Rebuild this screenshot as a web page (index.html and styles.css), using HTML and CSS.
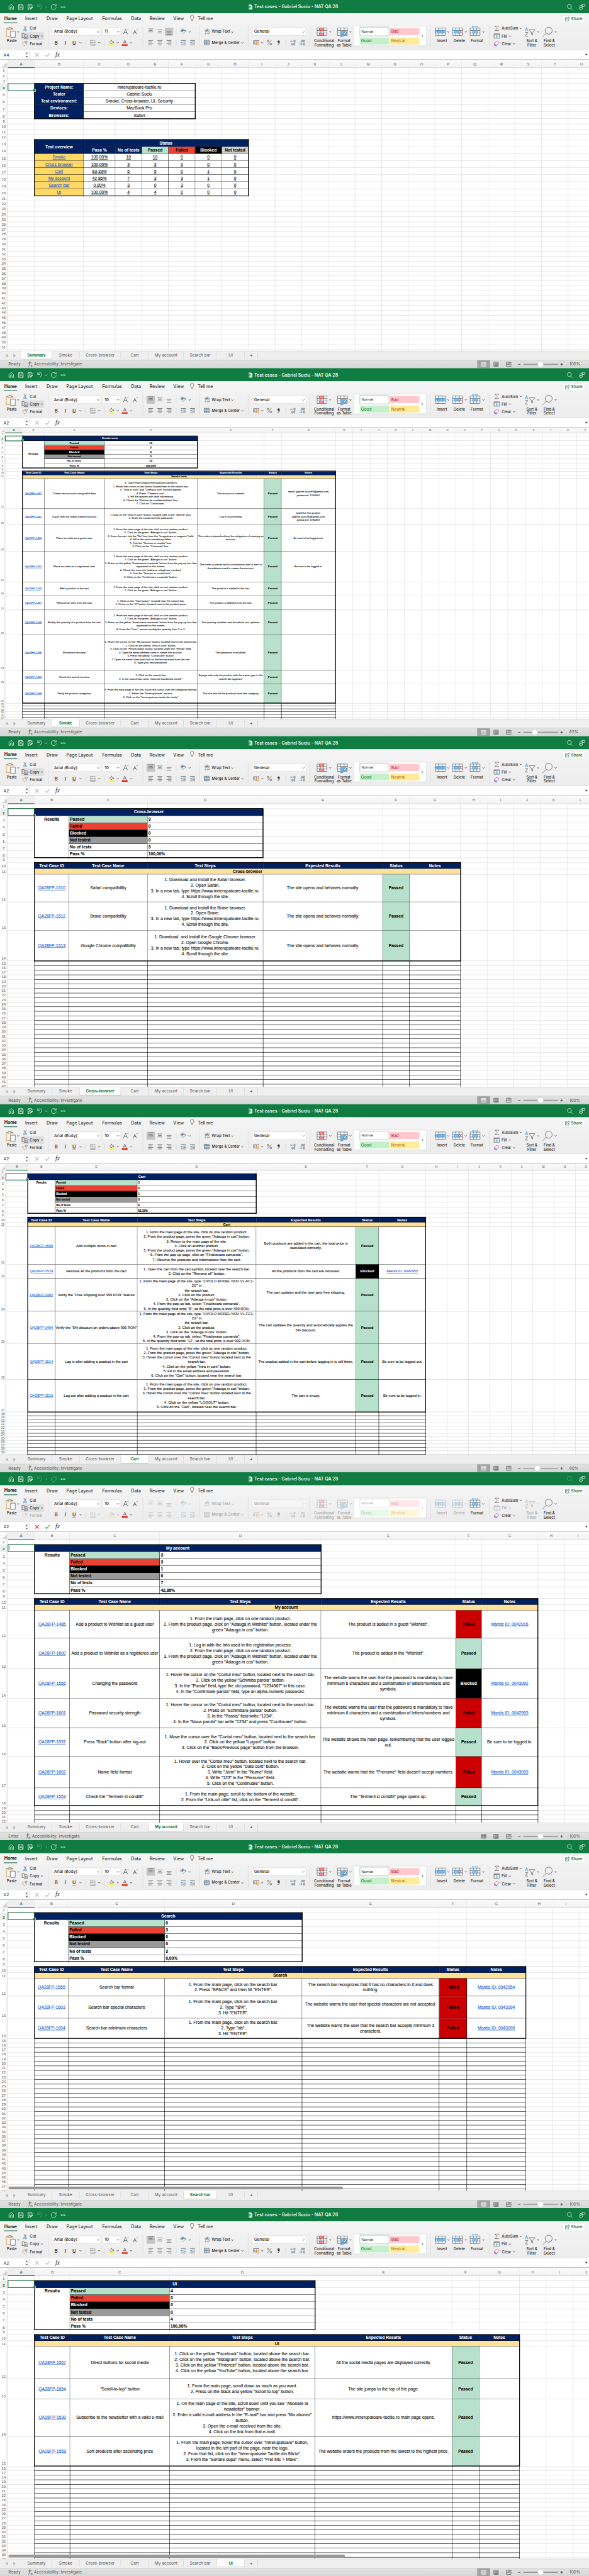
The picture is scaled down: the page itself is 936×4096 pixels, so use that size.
FILE: index.html
```
<!DOCTYPE html>
<html lang="en">
<head>
<meta charset="utf-8">
<title>Test cases - Gabriel Suciu - NAT QA 28</title>
<link rel="stylesheet" href="styles.css">
</head>
<body>
<div class="page"><main class="stage" id="stage"></main></div>
<script src="app.js"></script>
</body>
</html>
```

FILE: styles.css
```
* { box-sizing: border-box; }
body { margin: 0; background: #fff; }
.page { width: 936px; height: 4096px; overflow: hidden; }
.stage { width: 1680px; height: 7350px; transform: scale(0.557143, 0.557279); transform-origin: 0 0; }
.window { width: 1680px; height: 1050px; overflow: hidden; display: flex; flex-direction: column; font-family: Inter, "Open Sans", sans-serif; color: #2b2b2b; background: #fff; }
svg { display: block; fill: none; stroke: #4a4a4a; stroke-width: 1.2; overflow: visible; }
.it { flex: none; white-space: nowrap; display: flex; align-items: center; }
.it.center { justify-content: center; }
.it.dim { opacity: 0.38; }

/* Title bar */
.titlebar { height: 38px; background: #107c41; display: flex; color: #e9f5ee; font-size: 12.8px; font-weight: 600; letter-spacing: -0.05px; }
.titlebar svg { stroke: #e4f2ea; stroke-width: 1.4; }

/* Ribbon */
.ribbon { height: 105px; background: linear-gradient(#f5f5f5, #ececec); border-bottom: 1px solid #c9c9c9; }
.tabs { height: 30px; display: flex; font-size: 12.8px; font-weight: 500; color: #333; }
.tabs .home { font-weight: 700; color: #222; letter-spacing: -0.2px; border-bottom: 2.4px solid #1e7145; height: 27.5px; padding-top: 2.5px; }
.tabs .share { height: 23px; margin-top: 4.5px; background: #fff; border: 1px solid #d6d6d6; border-radius: 3px; color: #1e7145; font-size: 11.5px; font-weight: 600; }
.groups { height: 75px; padding-top: 4px; display: flex; font-size: 10.7px; font-weight: 500; color: #222; }
.group { height: 62px; display: flex; flex: none; border-right: 1px solid #d2d2d2; }
.group.last { border: 0; }
.stack2 { padding-top: 5.5px; display: flex; flex-direction: column; gap: 8.5px; align-items: flex-start; }
.stack3 { padding-top: 0.5px; display: flex; flex-direction: column; align-items: flex-start; }
.line { display: flex; height: 23px; }
.stack3 .line { height: 22px; }
.big { display: flex; flex-direction: column; align-items: center; line-height: 12.2px; text-align: center; height: 62px; }
.field { height: 23px; width: 100%; background: #fff; border: 1px solid #d0d0d0; border-radius: 3px; display: flex; align-items: center; justify-content: space-between; padding-left: 5px; font-size: 11.8px; color: #1e1e1e; }
.pressed { background: #c4c4c4; border-radius: 2px; }
.copy { background: #dedede; border-radius: 3px; }
.gallery { width: 100%; height: 57px; margin-bottom: 2px; background: #fff; border: 1px solid #d2d2d2; border-radius: 3px; display: grid; grid-template-columns: 84px 84px 18px; column-gap: 2px; padding: 1px 0 0 17px; font-size: 11.6px; font-weight: 400; }
.gallery.dim > * { opacity: 0.4; }
.style { height: 20px; margin-top: 4px; padding-left: 4px; line-height: 20px; }
.style.normal { height: 26px; margin-top: 1px; border: 1.5px solid #55a478; border-radius: 2px; line-height: 24px; color: #111; font-family: "Liberation Sans", sans-serif; font-size: 10.4px; }
.style.bad { background: #ffc7ce; color: #b0101c; }
.style.good { background: #c6efce; color: #0f7416; margin-top: 1px; grid-column: 1; }
.style.neutral { background: #ffeb9c; color: #a36200; margin-top: 1px; }
.more { grid-column: 3; grid-row: 1 / span 2; align-self: center; }
.big-i { font-size: 13.5px; font-weight: 600; color: #404040; }
.serif { font-family: "Liberation Serif", serif; font-style: italic; font-size: 16px; font-weight: 400; }

/* Formula bar */
.formula { height: 28px; background: #fff; border-bottom: 2px solid #c2c2c2; display: flex; font-size: 12px; }
.namebox { height: 26px; border-right: 1px solid #c0c0c0; padding-left: 10px; }
.fx { font-family: "Liberation Serif", serif; font-style: italic; font-size: 17px; border-right: 1px solid #ddd; height: 18px; margin-top: 4px; }

/* Sheet */
.sheet { height: 830px; overflow: hidden; display: grid; align-content: start; font-family: "Liberation Sans", Arial, sans-serif; font-size: var(--fs); line-height: var(--lh); color: #000; position: relative; -webkit-text-stroke: 0.15px currentColor; }
.vline { border-right: 1px solid #d6d6d6; }
.hline { border-bottom: 1px solid #d6d6d6; }
.colhead { background: linear-gradient(#fafafa, #f2f2f2); border-bottom: 1px solid #b9b9b9; border-right: 1px solid #dfdfdf; color: #666; font-size: var(--hs); display: flex; align-items: center; justify-content: center; }
.rowhead { background: linear-gradient(90deg, #fff 60%, #f0f0f0); border-bottom: 1px solid #e2e2e2; border-right: 1px solid #cfcfcf; color: #666; font-size: var(--hs); display: flex; align-items: flex-end; justify-content: center; line-height: var(--rl); padding-right: 1px; }
.colhead.on { background: #efefef; color: #1e7145; border-bottom: 2px solid #1e7145; font-weight: 700; }
.rowhead.on { background: #eee; color: #1e7145; font-weight: 700; }
.corner { background: #fafafa; border-bottom: 1px solid #b9b9b9; border-right: 1px solid #cfcfcf; display: flex; align-items: flex-end; justify-content: flex-end; padding: 0 2px 2px 0; }
.corner i { border: solid transparent; border-width: 0 0 var(--ct) var(--cl); border-bottom-color: #d2d2d2; }
.cell { background: #fff; border-right: 1px solid #000; border-bottom: 1px solid #000; display: flex; align-items: center; justify-content: center; text-align: center; white-space: nowrap; overflow: hidden; }
.cell.top { align-items: flex-start; padding-top: 1px; }
.cell.left { justify-content: flex-start; padding-left: 2px; text-align: left; }
.cell.b { font-weight: 700; font-size: var(--bs); }
.cell.small { font-size: 8px; }
.cell.navy { background: #00205f; color: #fff; }
.cell.green { background: #b7e1cd; }
.cell.red { background: #ea4335; }
.cell.crimson { background: #cc0000; }
.cell.black { background: #000; color: #fff; }
.cell.gray { background: #999; }
.cell.silver { background: #ccc; }
.cell.cream { background: #ffe299; }
.cell.gold { background: #ffd966; }
.link { color: #1155cc; text-decoration: underline; }
.u { text-decoration: underline; }
.ruled { border-bottom: 1px solid #000; }
.ruledv { border-right: 1px solid #000; }
.frame { border: 2.4px solid #000; margin: -1.7px -0.7px -0.7px -1.7px; }
.select { border: 2px solid #1e7145; margin: -1.5px -0.5px -0.5px -1.5px; display: flex; align-items: flex-end; justify-content: flex-end; }
.select.handle::after { content: ""; width: 6px; height: 6px; background: #1e7145; border: 1px solid #fff; margin: 0 -4px -4px 0; flex: none; }
.select.edit { align-items: flex-start; justify-content: flex-start; }
.select.edit::after { content: ""; width: 1px; height: 12px; margin: 2px; background: #000; }
.thumb { position: absolute; left: 24px; bottom: 4px; height: 8px; border-radius: 4px; background: #999; }

/* Sheet tabs and status bar */
.sheettabs { height: 26px; background: #efefef; border-top: 1px solid #cfcfcf; display: flex; font-size: 11.6px; color: #555; }
.sheettabs .tab { height: 22px; border-right: 1px solid #cfcfcf; justify-content: center; }
.sheettabs .on { background: #fff; color: #107c41; font-weight: 700; border-radius: 0 0 3px 3px; box-shadow: 0 1px 1px #aaa; letter-spacing: -0.3px; }
.status { height: 23px; background: linear-gradient(#e2e2e2, #d6d6d6); border-top: 1px solid #b4b4b4; display: flex; font-size: 11.7px; color: #555; }
.mode { background: #a3a3a3; }
.mode svg { stroke: #fff; }
```

FILE: app.js
```
const box = (x, w, html, cls = '') => ({ x, w, html, cls });
const flow = (x0, items) => {
  let c = x0;
  return items.map(i => {
    const m = +(i.x - c).toFixed(2);
    c = i.x + i.w;
    return `<div class="it ${i.cls}" style="margin-left:${m}px;width:${i.w}px">${i.html}</div>`;
  }).join('');
};
const svg = (x, y, w, h, body) => `<svg width="${w}" height="${h}" viewBox="${x} ${y} ${w} ${h}">${body}</svg>`;
const icon = (x, w, y, h, body, cls) => box(x, w, svg(x, y, w, h, body), cls);
const caret = (x, y) => `<path stroke-width="1.6" d="M${x - 2.6} ${y - 1.4}l2.6 2.8 2.6-2.8"/>`;
const B = '#2f8fd8';

function titlebar(o) {
  const I = (x, w, b, c) => icon(x, w, 0, 38, b, c);
  return `<div class="titlebar">` + flow(0, [
    I(24, 16, '<path d="M25.5 18.5 32 12.6l6.5 5.900V27h-4.200v-5.500a2.300 2.300 0 0 0-4.600 0V27h-4.200z"/>'),
    I(52, 15, '<path d="M52.700 13h11l2.500 2.500V27H52.700zM55.500 13v4.500h7.500V13M55.500 27v-6h8v6"/>'),
    I(79, 16, '<path d="M92 17v-1.500L89.500 13H79.700v14h4M82.500 13v4.500h6.500V13M82.500 27v-6h5"/><path stroke-width="3" d="M86.500 26l6.500-6.500"/>'),
    I(106, 16, '<path d="M107.500 12.500v6h6M107.500 18c3-4 8-6 10.500-3s1 5-4 12"/>', o.undo ? '' : 'dim'),
    I(128, 8, caret(132, 20.500), o.undo ? '' : 'dim'),
    I(144, 18, '<path d="M158.500 15.500a7.200 7.200 0 1 0 1.800 4.800M160 12v5h-5"/>', o.edit ? 'dim' : ''),
    I(173, 14, '<path stroke="none" fill="#e4f2ea" d="M173.500 18.700h3v3h-3zM178.500 18.700h3v3h-3zM183.500 18.700h3v3h-3z"/>'),
    I(708, 12, '<path fill="#fff" stroke="none" d="M709.500 13h6.500l3.500 3.500V27h-10z"/><path fill="#107c41" stroke="none" d="M708 16h7v8h-7z"/><path stroke-width="1.200" d="M709.500 17.800l4 4.500m0-4.500l-4 4.500"/>'),
    box(725, 250, 'Test cases - Gabriel Suciu - NAT QA 28'),
    I(1617, 17, '<circle cx="1624" cy="18.500" r="5.700"/><path d="M1628 22.500l5 5"/>', o.edit ? 'dim' : ''),
    I(1651, 18, '<circle cx="1656.500" cy="18" r="2.700"/><path d="M1652 22.500h9.500c0 7-9.500 7-9.500 0zM1660 12.500h8v5.500h-4l-2.500 2z"/>')
  ]) + `</div>`;
}

function tabs() {
  const names = [['Insert', 72], ['Draw', 133], ['Page Layout', 189.3], ['Formulas', 291.5], ['Data', 374], ['Review', 426.4], ['View', 494.3]];
  return `<div class="tabs">` + flow(0, [
    box(11.3, 37.500, 'Home', 'home center'),
    ...names.map(([t, x]) => box(x, 48, t)).map((b, i, a) => (b.w = i < a.length - 1 ? a[i + 1].x - b.x : 44, b)),
    icon(541, 16, 38, 30, '<path d="M546 55.500c0-2.500-3-3.500-3-6.800a5 5 0 0 1 10 0c0 3.300-3 4.300-3 6.800zM546 58.500h4"/>'),
    box(564, 50, 'Tell me'),
    box(1604, 65, svg(1604, 42, 24, 23, '<path stroke="#1e7145" d="M1616 49h-4.500v10h10v-3M1614.500 55c0-4 3-5.500 6-5.500v-2.500l4 4-4 4v-2.500c-2.500 0-4.500.500-6 2.500z"/>') + 'Share', 'share')
  ]) + `</div>`;
}

const lines = (x, y, s) => s.map(([dx, w], i) => `<path d="M${x + dx} ${y + i * 4.200}h${w}"/>`).join('');
const grid = (x, y) => `<path fill="#fff" d="M${x} ${y}h28v21h-28z"/><path d="M${x} ${y + 7}h28M${x} ${y + 14}h28M${x + 9} ${y}v21M${x + 19} ${y}v21"/>`;

function groups(o) {
  const d = o.edit ? 'dim' : '';
  const L = (x0, items) => `<div class="line">${flow(x0, items)}</div>`;
  const U = (x, w, b, c = '') => icon(x, w, 77.5, 23, b, c);
  const D = (x, w, b, c = '') => icon(x, w, 109, 23, b, c);
  const S = x => `<path stroke="#d4d4d4" d="M${x} 112v18"/>`;
  const big = (x, w, art, label, c = '') => box(x, w, `<div class="big">${svg(x, 72, w, 39.500, art)}<div>${label}</div></div>`, c);
  const group = (x, end, items, c = '') => `<div class="group ${c}" style="width:${end - x}px">${flow(x, items)}</div>`;
  const field = (x, w, t) => `<div class="field">${t}${svg(x, 77.500, 12, 23, caret(x + 5, 89.500))}</div>`;
  const press = n => o.align === n ? 'pressed' : '';

  const clip = group(0, 138, [
    big(11, 45, `<path stroke="#e9a045" stroke-width="1.800" d="M29 104.500H18V81h19v7"/><path fill="#f3f3f3" d="M22 83v-3h3c0-3.500 5-3.500 5 0h4v3z"/><path fill="#fff" d="M30 89h13.500v17.500H30z"/>${caret(52, 91)}`, 'Paste'),
    box(60, 66, `<div class="stack3">` +
      L(60, [icon(66, 13, 72.5, 22, `<path d="M68 77l5.500 10M75 77l-5.500 10"/><circle stroke="${B}" cx="68" cy="89" r="2"/><circle stroke="${B}" cx="74.500" cy="89" r="2"/>`), box(85, 30, 'Cut')]) +
      L(60, [box(60, 66, flow(60, [icon(62, 19, 94.5, 22, '<path d="M68 109.500h-5V98h6M69 100.500h6.500l3.500 3.500v8.500H69zM71.500 106h5M71.500 109h5"/>'), box(85, 28, 'Copy'), icon(115, 10, 94.5, 22, caret(119.500, 105.500))]), o.copy ? 'copy' : '')]) +
      L(60, [icon(62, 18, 116.5, 22, '<path d="M72 122.500l3-3.500 3 3-3 3.500"/><path d="M70 122l6.500 6"/><path stroke="#e08a3a" d="M70 122l-6.500 3 6 8.500 7-5.500z"/>', d), box(85, 38, 'Format', d)]) + `</div>`)
  ]);

  const A = (x, s) => `<path stroke-width="1.300" d="M${x} 96l${s / 2.4} -${s}l${s / 2.4} ${s}M${x + 1.700} ${96 - s * .35}h${s / 1.750}"/>`;
  const font = group(138, 408, [box(138, 262, `<div class="stack2">` +
    L(138, [box(148, 140, field(148, 140, 'Arial (Body)')), box(292, 53, field(292, 53, o.size)),
      U(352, 17, A(352, 14) + `<path stroke="${B}" d="M363 84l2-2.300 2 2.300"/>`), U(380, 15, A(380, 11) + `<path stroke="${B}" d="M389.500 82l2 2.300 2-2.300"/>`)]) +
    L(138, [box(154, 12, 'B', 'big-i center'), box(181, 10, 'I', 'serif center'), box(206, 11, '<u>U</u>', 'big-i center'),
      D(224, 24, caret(229.600, 121) + S(244.500)),
      D(257, 44, `<path stroke-dasharray="1.500 1.500" d="M258 114h13v12M258 114v12M264.500 114v12M258 120h13"/><path stroke-width="1.600" d="M257 127.500h15"/>${caret(283, 121)}${S(297.500)}`, d),
      D(310, 30, `<path d="M313 120l5.500-5.500 4.500 5-5.500 4.500zM318 113v4"/><path stroke="${B}" stroke-width="1.800" d="M323 117.500c1.500 1.500 1.500 3 1.500 5"/><path stroke="none" fill="#ff0" d="M310 125.500h16v4h-16z"/>${caret(336, 121)}`, d),
      D(347, 32, `<path d="M351.500 124l4.500-11 4.500 11M353 120.500h6"/><path stroke="none" fill="#f00" d="M347.500 125.500h16.500v4h-16.500z"/>${caret(374, 121)}`)]) + `</div>`)]);

  const al = group(408, 569, [box(408, 158, `<div class="stack2">` +
    L(408, [U(418, 24, lines(423, 81, [[0, 14], [2, 10], [0, 14]]), d + ' ' + press('top')), U(444, 24, lines(449, 84, [[0, 14], [2, 10], [0, 14]]), d),
      U(470, 24, lines(475, 88, [[0, 14], [2, 10], [0, 14]]), d + ' ' + press('bottom')),
      U(500, 46, `<path stroke="#d4d4d4" d="M502.500 80v18"/><path stroke="${B}" stroke-width="1.400" d="M521 95.500l9-9.500M526 85.500h4.500v4.500"/><circle cx="518" cy="87" r="2.500"/><circle cx="523" cy="84" r="2.200"/><path d="M516 82l5 8M519 80l5 6"/>${caret(541, 89.500)}`, d)]) +
    L(408, [D(423, 15, lines(423, 114.5, [[0, 14], [0, 10], [0, 14], [0, 10]]), d), D(449, 15, lines(449, 114.5, [[0, 14], [2, 10], [0, 14], [2, 10]]), d), D(475, 15, lines(475, 114.5, [[0, 14], [4, 10], [0, 14], [4, 10]]), d),
      D(500, 31, S(502.500) + lines(516, 114.5, [[0, 14], [7, 7], [7, 7], [0, 14]]) + `<path stroke="${B}" stroke-width="1.400" d="M522 120.800h-6m2.500-2.500l-2.500 2.500 2.500 2.500"/>`, d),
      D(542, 15, lines(542, 114.5, [[0, 14], [7, 7], [7, 7], [0, 14]]) + `<path stroke="${B}" stroke-width="1.400" d="M542 120.800h6m-2.500-2.500l2.500 2.500-2.500 2.500"/>`, d)]) + `</div>`)]);

  const wrap = group(569, 708, [box(569, 132, `<div class="stack2">` +
    L(569, [U(584, 16, `<circle cx="587" cy="86" r="2.200"/><path d="M589.500 83v5.500M592 80v8.500M588 92.500c-3-1.500-5 4 0 3"/><circle cx="594.500" cy="86" r="2.200"/><path stroke="${B}" stroke-width="1.400" d="M597 90v4h-5.500m2.500-2.500l-2.500 2.500 2.500 2.500"/>`, d), box(604, 54, 'Wrap Text', d), U(658, 10, caret(662.700, 90), d)]) +
    L(569, [D(582, 16, `<path d="M582.500 114h14v13h-14zM589.500 114v3M589.500 124v3"/><path stroke="${B}" stroke-width="1.400" d="M583 117.500h13.500v6H583zM585 120.500h9.500"/>`, d), box(604, 82, 'Merge &amp; Center', d), D(687, 10, caret(691.500, 121), d)]) + `</div>`)]);

  const num = group(708, 885, [box(708, 168, `<div class="stack2">` +
    L(708, [box(718.5, 155, field(718, 155, 'General'), o.edit ? 'dim' : '')]) +
    L(708, [D(722, 30, `<path d="M733 124.500h-10V115h15.500v4M727 117.500c-2 0-2 4.500 0 4.500M732 117.500c-2 0-2 4.500 0 4.500"/><path stroke="#e08a3a" fill="#fff" d="M732 120h6.500v7.500H732zM732 122.500h6.500M732 125h6.500"/>${caret(748, 121)}`, d),
      D(761, 15, '<circle cx="764.500" cy="116.500" r="2.600"/><circle cx="772.500" cy="124.500" r="2.600"/><path d="M774 114l-11 13"/>', d),
      D(790, 28, `<path fill="#444" stroke="none" d="M791.500 118a3.300 3.300 0 1 1 6.500 0c0 5-2.500 7.500-5.500 9.500l-.500-1c2-1.500 3-3 3-5-2 .500-3.500-1-3.500-3.500z"/>${S(815)}`, d),
      D(828, 16, `<path stroke="${B}" stroke-width="1.400" d="M835 116.500h-6.500m2.500-2.500l-2.500 2.500 2.500 2.500"/><ellipse cx="840" cy="116.500" rx="2" ry="3.500"/><ellipse cx="834" cy="125" rx="1.800" ry="3"/><ellipse cx="839.500" cy="125" rx="1.800" ry="3"/><path d="M830 128h1"/>`, d),
      D(854, 17, `<path stroke="${B}" stroke-width="1.400" d="M854.500 125h7m-2.500-2.500l2.500 2.500-2.500 2.500"/><ellipse cx="861.500" cy="116.500" rx="1.800" ry="3.300"/><ellipse cx="867" cy="116.500" rx="1.800" ry="3.300"/><ellipse cx="867" cy="125" rx="1.800" ry="3"/><path d="M857 119.500h1"/>`, d)]) + `</div>`)]);

  const styles = group(885, 1227, [
    big(893, 63, grid(904.5, 80) + `<path fill="#ff8a8a" stroke="#e33" d="M911 80h11v7h-11zM911 94h11v7.500h-11z"/><path fill="#6db3ec" stroke="none" d="M911 87.500h5v6h-5z"/>${caret(942, 91)}`, 'Conditional<br>Formatting', d),
    big(958, 47, grid(962.5, 80) + `<path fill="#6db3ec" stroke="none" d="M972 87.500h18V101h-18z"/><path fill="#eee" d="M979 96l11-11 2 2-9.500 12z"/><path fill="#6db3ec" stroke="${B}" d="M979 97l3 3c-2 4-7 6-11 5 3-1 3-3 4-5 1-2 2-3 4-3z"/>${caret(999.6, 91)}`, 'Format<br>as Table', d),
    box(1008, 208, `<div class="gallery ${d}"><div class="style normal">Normal</div><div class="style bad">Bad</div><div class="style good">Good</div><div class="style neutral">Neutral</div><div class="more">${svg(1200, 92, 14, 20, '<path stroke-width="1.600" d="M1205 98.500l3 3.300-3 3.300"/>')}</div></div>`)
  ]);

  const cells = group(1227, 1396, [
    big(1238, 45, grid(1242, 80) + `<path fill="#7fc0f2" stroke="${B}" d="M1247 86.500h23v8h-23zM1255 86.500v8M1263 86.500v8"/><path stroke="${B}" stroke-width="1.400" d="M1252 90.500h-12m5.500-5l-5.500 5 5.500 5"/>${caret(1278.7, 91)}`, 'Insert', d),
    big(1288, 44, grid(1291, 80) + `<path fill="#7fc0f2" stroke="${B}" d="M1295 86.500h13v8h-13z"/><path stroke="#f04438" stroke-width="1.500" d="M1308 84.500l12 12.500m0-12.500l-12 12.500"/>${caret(1328.6, 91)}`, 'Delete', d),
    big(1338, 45, grid(1341, 80) + `<path fill="#7fc0f2" stroke="${B}" d="M1348 86.500h14v8h-14zM1347.500 76.500h15M1347.500 74.500v4M1362.500 74.500v4"/>${caret(1379, 91)}`, 'Format')
  ]);

  const E = (x, w, y0, b, c) => icon(x, w, y0, 22, b, c);
  const edit = group(1396, 1600, [
    box(1396, 95, `<div class="stack3">` +
      L(1396, [E(1410, 15, 72.5, '<path d="M1422.500 79v-2h-11l6.500 6.500-6.500 6.500h11v-2"/>'), box(1431, 47, 'AutoSum'), E(1480, 10, 72.5, caret(1485, 83.5))]) +
      L(1396, [E(1408, 18, 94.5, `<path d="M1409 99h15.500v12.500H1409zM1409 101h15.500"/><path stroke="${B}" stroke-width="1.400" d="M1417 102v7.500m-3-3l3 3 3-3"/>`, d), box(1431, 18, 'Fill', d), E(1450, 10, 94.5, caret(1454.5, 105.500), d)]) +
      L(1396, [E(1409, 16, 116.5, '<path stroke="#a349b4" fill="#fbf4fc" d="M1409.500 127.500l6.500-7 7.500 3-7.500 9.500z"/><path stroke="#a349b4" fill="#d9a0e2" d="M1409.500 127.500l5 1.500 2 5-6-2z"/>'), box(1431, 28, 'Clear'), E(1461, 10, 116.5, caret(1466, 127.500))]) + `</div>`),
    big(1495, 44, `<path stroke="${B}" stroke-width="1.400" d="M1498 89l4-10.500 4 10.500M1499.500 85.500h5"/><path d="M1498.500 92.500h7l-7 10.500h7.500M1509 84.500h17l-6.500 7.500v8l-4-2.500V92z"/>${caret(1535, 91)}`, 'Sort &amp;<br>Filter', d),
    big(1544, 45, `<circle cx="1565" cy="87.500" r="10"/><path d="M1558 95l-10.500 10.500"/>${caret(1585, 91)}`, 'Find &amp;<br>Select')
  ], 'last');
  return `<div class="groups">${clip}${font}${al}${wrap}${num}${styles}${cells}${edit}</div>`;
}

function formula(o) {
  const x = o.edit ? '#e5484d' : '#c3c3c3', v = o.edit ? '#5fae3c' : '#c3c3c3';
  return `<div class="formula">` + flow(0, [
    box(0, 85, flow(10, [box(10, 50, o.ref), icon(70, 12, 143, 26, '<path fill="#666" stroke="none" d="M73 154l3.300-5 3.300 5zM73 159.500l3.300 5 3.300-5z"/>')]), 'namebox'),
    icon(98, 15, 143, 27, `<path stroke="${x}" stroke-width="2.400" d="M100.500 151.500l10 10m0-10l-10 10"/>`),
    icon(127, 16, 143, 27, `<path stroke="${v}" stroke-width="2.400" d="M129 157.500l4 4 8.500-10"/>`),
    box(158, 23, 'fx', 'fx'),
    icon(1664, 14, 143, 27, '<path fill="#555" stroke="none" d="M1668.500 153.500h7.500l-3.700 5.500z"/>')
  ]) + `</div>`;
}

const letters = 'ABCDEFGHIJKLMNOPQRSTUVWXYZ';
function sheet(o) {
  const y0 = 171, yEnd = 1001;
  const diff = (a, s) => a.map((v, i) => +((v + .5) - (i ? a[i - 1] + .5 : s)).toFixed(2));
  const cw = diff(o.cols, 0), rh = diff(o.rows, y0);
  const px = a => a.map(v => v + 'px').join(' ');
  const at = (c1, c2, r1, r2) => `grid-area:${r1 + 1}/${c1 + 1}/${r2 + 2}/${c2 + 2}`;
  let h = '';
  const nc = cw.length - 1, nr = rh.length - 1;
  for (let c = 1; c <= nc; c++) h += `<div class="vline" style="${at(c, c, 1, nr)}"></div>`;
  for (let r = 1; r <= nr; r++) h += `<div class="hline" style="${at(1, nc, r, r)}"></div>`;
  h += `<div class="corner" style="${at(0, 0, 0, 0)}"><i></i></div>`;
  for (let c = 1; c <= nc; c++) h += `<div class="colhead ${c === 1 ? 'on' : ''}" style="${at(c, c, 0, 0)}">${letters[c - 1]}</div>`;
  const sel = +o.ref.slice(1);
  for (let r = 1; r <= nr; r++) {
    const label = yEnd - o.rows[r - 1] > 4 ? r : '';
    h += `<div class="rowhead ${r === sel ? 'on' : ''}" style="${at(0, 0, r, r)}">${label}</div>`;
  }
  for (const [c1, c2, r1, r2, t, cls] of o.cells) h += `<div class="cell ${cls}" style="${at(c1, c2, r1, r2)}"><div>${t}</div></div>`;
  if (o.ruled) {
    for (let r = o.ruled; r <= nr; r++) h += `<div class="ruled" style="${at(2, 7, r, r)}"></div>`;
    for (let c = 1; c <= 7; c++) h += `<div class="ruledv" style="${at(c, c, o.ruled, nr)}"></div>`;
  }
  for (const f of o.frames) h += `<div class="frame" style="${at(...f)}"></div>`;
  h += `<div class="select ${o.edit ? 'edit' : 'handle'}" style="${at(1, 1, sel, sel)}"></div>`;
  if (o.thumb) h += `<div class="thumb" style="width:${o.thumb}px"></div>`;
  const f = o.fonts;
  return `<div class="sheet" style="grid-template-columns:${px(cw)};grid-template-rows:${px(rh)};--fs:${f[0]}px;--bs:${f[1]}px;--lh:${f[2]}px;--hs:${f[3]}px;--rl:${f[4]}px;--ct:${rh[0] * .6}px;--cl:${cw[0] * .6}px">${h}</div>`;
}

function bottom(o) {
  const n = ['Summary', 'Smoke', 'Cross-browser', 'Cart', 'My account', 'Search bar', 'UI', '<b>+</b>'];
  const e = [61, 148, 227, 345, 424, 524, 619, 698, 736];
  const zx = { 100: 1542, 80: 1532.6, 65: 1525.3 }[o.zoom];
  const G = (x, w, b, c) => icon(x, w, 1027, 22, b, c);
  return `<div class="sheettabs">` + flow(0, [
    icon(0, 60, 1001, 25, '<path fill="#b5b5b5" stroke="none" d="M22 1009v10l-7-5zM38 1009v10l7-5z"/>'),
    ...n.map((t, i) => box(e[i], e[i + 1] - e[i], t, 'tab ' + (i === o.tab ? 'on' : '')))
  ]) + `</div><div class="status">` + flow(0, [
    box(24, 36, o.edit ? 'Enter' : 'Ready'),
    icon(o.edit ? 73 : 79, 15, 1027, 22, `<g transform="translate(${o.edit ? 73 : 79} 0)"><circle cx="6" cy="1032.500" r="1.800"/><path d="M1 1033.500c3 3 7 3 10 0M6 1036v3l-3.500 6M6 1039l2 2M8.500 1040.500l5 5m0-5l-5 5"/></g>`),
    box(o.edit ? 91 : 97, 150, 'Accessibility: Investigate'),
    G(1361, 37, '<path d="M1373 1033h13v11h-13zM1373 1036.500h13M1373 1040.200h13M1377.300 1033v11M1381.700 1033v11"/>', o.edit ? '' : 'mode'),
    G(1405, 20, '<path d="M1408.500 1032.500h13v12h-13zM1411.500 1035h7v7.500h-7zM1413 1037h4M1413 1039h4M1413 1041h4"/>'),
    G(1442, 20, '<path d="M1444.500 1032.500h13v12h-13zM1449 1032.500v6.500h-4.500M1453.500 1032.500v6.500h-4.500"/>'),
    G(1477, 132, `<path stroke="#555" stroke-width="1.700" d="M1477.500 1038.500h7M1598.500 1038.500h7.500M1602.200 1034.700v7.500"/><path stroke="#999" stroke-width="3" d="M1493 1038.500h99"/><path stroke="#eee" stroke-width="1.500" d="M1542 1037v3"/><ellipse cx="${zx}" cy="1038.500" rx="8" ry="7.500" fill="#fff" stroke="#ccc" stroke-width=".6"/>`),
    box(1624, 40, o.zoom + '%')
  ]) + `</div>`;
}

const steps = n => Array.from({ length: n }, (_, i) => i);
const run = (list, d, n) => list.concat(steps(n).map(i => +(list[list.length - 1] + d * (i + 1)).toFixed(2)));
const statusCls = { Passed: 'green', Failed: 'crimson', Blocked: 'black' };

/* Builds the result summary and the test case table of one sheet. */
function testSheet(o) {
  const cells = [[2, 4, 2, 2, o.title, 'b navy' + (o.mid ? '' : ' top')], [2, 2, 3, 8, 'Results', 'b ' + (o.mid ? '' : 'top ') + (o.small ? 'small' : '')]];
  const names = ['Passed', 'Failed', 'Blocked', 'Not tested', 'No of tests', 'Pass %'], tint = ['green', 'red', 'black', 'gray', '', ''];
  names.forEach((t, i) => {
    const c = 'b ' + (o.mid ? '' : (o.small && i > 2 ? '' : 'top ') + 'left ') + (o.small ? 'small ' : '');
    cells.push([3, 3, 3 + i, 3 + i, t, c + tint[i]], [4, 4, 3 + i, 3 + i, o.results[i], c]);
  });
  ['Test Case ID', 'Test Case Name', 'Test Steps', 'Expected Results', 'Status', 'Notes'].forEach((t, i) => cells.push([2 + i, 2 + i, 10, 10, t, 'b navy']));
  cells.push([2, 7, 11, 11, o.title, 'b cream']);
  o.tests.forEach((t, i) => {
    const r = 12 + i, note = t[5] || '';
    cells.push([2, 2, r, r, 'QA28FP-' + t[0], 'link'], [3, 3, r, r, t[1], ''], [4, 4, r, r, t[2].split('|').join('<br>'), ''],
      [5, 5, r, r, t[3].split('|').join('<br>'), ''], [6, 6, r, r, t[4], 'b ' + statusCls[t[4]]], [7, 7, r, r, note.split('|').join('<br>'), note.startsWith('Mantis') ? 'link' : '']);
  });
  const last = 11 + o.tests.length;
  return { ref: 'A2', size: '10', align: 'top', copy: true, zoom: 100, fonts: [12.25, 12, 16, 10.5, 13], ...o, cells, frames: [[2, 4, 2, 8], [2, 7, 10, last]], ruled: last + 1 };
}

const sum = [[2, 2, 4, 4, 'Project Name:', 'b navy'], [2, 2, 5, 5, 'Tester', 'b navy'], [2, 2, 6, 6, 'Test environment:', 'b navy'], [2, 2, 7, 7, 'Devices:', 'b navy'], [2, 2, 8, 8, 'Browsers:', 'b navy'],
  ...['intrerupatoare-tactile.ro', 'Gabriel Suciu', 'Smoke, Cross-browser, UI, Security', 'MacBook Pro', 'Safari'].map((t, i) => [3, 6, 4 + i, 4 + i, t, '']),
  [2, 2, 13, 14, 'Test overview', 'b navy'], [3, 8, 13, 13, 'Status', 'b navy'],
  ...[['Pass %', 'navy'], ['No of tests', 'navy'], ['Passed', 'green'], ['Failed', 'red'], ['Blocked', 'black'], ['Not tested', 'silver']].map(([t, c], i) => [3 + i, 3 + i, 14, 14, t, 'b ' + c])];
[['Smoke', '100,00%', 10, 10, 0, 0, 0], ['Cross-browser', '100,00%', 3, 3, 0, 0, 0], ['Cart', '83,33%', 6, 5, 0, 1, 0], ['My account', '42,86%', 7, 3, 3, 1, 0], ['Search bar', '0,00%', 3, 0, 3, 0, 0], ['UI', '100,00%', 4, 4, 0, 0, 0]]
  .forEach((l, j) => l.forEach((t, i) => sum.push([2 + i, 2 + i, 15 + j, 15 + j, t, i ? 'u' : 'gold link'])));

const top8 = [193.5, 207.4, 227.4, 247.4, 267.4, 287.4, 307.4, 327.4, 347.3];
const P1 = '1. From the main page of the site, click on one random product.|';
const nou = (n, t) => '1. From the main page of the site, type "LIVOLO MODEL NOU VL-FC1-|' + `2G" in|the search bar.|2. Click on the product.|3. Click on the "Adauga in cos" button.|4. From the pop-up tab, select "Finalizeaza comanda".|5. In the quantity field write "${n}", so the total price is over ${t} RON.`;
const tail = '|3. In a new tab, type https://www.intrerupatoare-tactile.ro.|4. Scroll through the site.';

const windows = [
  { tab: 0, ref: 'A4', size: '11', align: 'bottom', copy: true, zoom: 100, fonts: [12.1, 12, 16, 10.5, 13], cells: sum,
    cols: run([22.5, 98.5, 238.5, 328.5], 76, 18),
    rows: run(run(run(run(run(run([193.5], 15, 3), 20, 5), 15, 4), 20, 8), 15, 5), 14, 27),
    frames: [[2, 6, 4, 8], [2, 8, 13, 20]] },
  testSheet({ tab: 1, title: 'Smoke tests', mid: true, undo: true, zoom: 65, fonts: [7.6, 7.65, 10, 7, 8.5], results: [10, 0, 0, 0, 10, '100,00%'],
    cols: run([14.7, 63.8, 126.3, 297.2, 563.2, 753.2, 802.3, 957.3], 49.08, 15),
    rows: [185.5, 194.2, 207.6, 220.4, 233.4, 246.4, 259.5, 272.5, 285.3, 294.6, 305.4, 315.4, 401.4, 446.6, 523.7, 611, 649.2, 691, 762, 862.5, 902, 956.2, 964.3, 972.3, 980.3, 988.4, 996.4, 1004.4],
    tests: [
      ['1481', 'Create new account using valid data', '1. Open https://www.intrerupatoare-tactile.ro|2. Hover the cursor on the button located next to the search bar.|3. "Intra in cont" and "Creeaza cont" buttons appear.|4. Press "Creeaza cont".|5. Fill the spaces with valid information.|6. Check the "Politica de confidentialitate" box.|7. Click on "Continuare."', 'The account is created.', 'Passed', 'email: gabriel.suciu95@gmail.com|password: 1234567'],
      ['1482', 'Log in with the newly created account', '1.Click on the "Intra in cont" button, located right to the "Search" box.|2. Enter the e-mail and the password.', 'Log in successfully.', 'Passed', 'Used for this project:|gabriel.suciu95@gmail.com|password: 1234567'],
      ['1486', 'Place an order as a guest user', P1 + '2. Click on the green "Adauga in cos" button.|3. From the cart, tick the "Nu" box from the "Inregistrare in magazin" field.|4. Fill in the other mandatory fields.|5. Tick the "Termeni si conditii" box.|6. Click on the "Comanda" box.', 'The order is placed without the obligation of creating an|account.', 'Passed', 'Be sure to be logged out.'],
      ['1597', 'Place an order as a registered user', P1 + '2. Click on the green "Adauga in cos" button.|3. Press on the yellow "Finalizeaza comanda" button from the pop-up box that|appeared on the screen.|4. Check the user info (address, telephone number).|5. Tick the "Termeni si conditii box".|6. Click on the "Confirmare comanda" button.', 'The order is placed and a confirmation mail is sent to|the address used to create the account.', 'Passed', 'Be sure to be logged in.'],
      ['1595', 'Add a product in the cart', P1 + '2. Click on the green "Adauga in cos" button.', 'The product is added in the cart.', 'Passed'],
      ['1487', 'Remove an item from the cart', '1. Click on the "Cart button", located near the search bar.|2. Press on the "X" button, located next to the product price.', 'The product is deleted from the cart.', 'Passed'],
      ['1596', 'Modify the quantity of a product from the cart', P1 + '2. Click on the green "Adauga in cos" button.|3. Press on the yellow "Finalizeaza comanda" button from the pop-up box that|appeared on the screen.|4. From the "Cant." section modify the quantity from 1 to 3.', 'The quantity modifies and the whole cart updates.', 'Passed'],
      ['1496', 'Password recovery', '1. Hover the cursor on the "My account" button, located next to the search bar.|2. Click on the yellow "Intra in cont" button.|3. Click on the "Parola uitata" button, located under the "Parola" field.|4. Type the email address used to create the account.|5. Press the yellow "Continuare" button.|7. Open the email client and click on the link received from the site.|8. Type your new password.', 'The password is modified.', 'Passed'],
      ['1488', 'Check the search function', '1. Click on the search bar.|2. In the search bar, write "extensie banda led sonoff".', 'A page with only the product with the name type in the|search bar appears.', 'Passed'],
      ['1598', 'Verify the product categories', '1. From the main page of the site, hover the cursor over the categories banner.|2. Select the "Intrerupatoare" section.|3. Click on the "Intrerupatoare tactile din sticla".', 'The site lists all the products from that category.', 'Passed']
    ] }),
  testSheet({ tab: 2, title: 'Cross-browser', undo: true, results: [3, 0, 0, 0, 3, '100,00%'],
    cols: run([22.5, 98.5, 196.7, 420.6, 750.3, 1092, 1167.5, 1313.4], 76, 5),
    rows: run([...top8, 361, 378.3, 395, 473.4, 555, 641.8, 655.2], 13.01, 27),
    tests: [
      ['1510', 'Safari compatibility', '1. Download and install the Safari browser.|2. Open Safari.' + tail, 'The site opens and behaves normally.', 'Passed'],
      ['1512', 'Brave compatibility', '1. Download and install the Brave browser.|2. Open Brave.' + tail, 'The site opens and behaves normally.', 'Passed'],
      ['1513', 'Google Chrome compatibility', '1. Download&nbsp; and install the Google Chrome browser.|2. Open Google Chrome.' + tail, 'The site opens and behaves normally.', 'Passed']
    ] }),
  testSheet({ tab: 3, title: 'Cart', small: true, undo: true, zoom: 80, fonts: [10.3, 10.2, 13, 8.5, 10], results: [5, 0, 1, 0, 6, '83,33%'],
    cols: run([17.4, 78.8, 157.5, 391.7, 730.4, 1014.4, 1080.7, 1214.2], 61.03, 8),
    rows: run([189.5, 199.2, 216.6, 232.4, 248.4, 264.5, 280.6, 296.6, 312, 323.1, 337.5, 350.9, 457.4, 497.2, 591.3, 684, 786.2, 878.6, 889.3], 10.01, 12),
    tests: [
      ['1599', 'Add multiple items in cart', P1 + '2. From the product page, press the green "Adauga in cos" button.|3. Return to the main page of the site.|4. Click on another product.|5. From the product page, press the green "Adauga in cos" button.|6. From the pop-up page, click on "Finalizeaza comanda".|7. Observe the products and informations from the cart.', 'Both products are added in the cart, the total price is|calculated correctly.', 'Passed'],
      ['1529', 'Remove all the products from the cart', '1. Open the cart from the cart symbol, located near the search bar.|2. Click on the "Remove all" button.', 'All the products from the cart are removed.', 'Blocked', 'Mantis ID: 0042955'],
      ['1492', 'Verify the "Free shipping over 499 RON" feature', nou(6, 499), 'The cart updates and the user gets free shipping.|&nbsp;', 'Passed'],
      ['1494', 'Verify the "5% discount on orders above 999 RON"', nou(12, 999), 'The cart updates the quantity and automatically applies the|5% discount.', 'Passed'],
      ['1514', 'Log in after adding a product in the cart', P1 + '2. From the product page, press the green "Adauga in cos" button.|3. Hover the cursor over the "Contul meu" button located next to the|search bar.|4. Click on the yellow "Intra in cont" button.|5. Fill in the email address and password.|6. Click on the "Cart" button, located near the search bar.', 'The product added in the cart before logging in is still there.', 'Passed', 'Be sure to be logged out.'],
      ['1515', 'Log out after adding a product in the cart', P1 + '2. From the product page, press the green "Adauga in cos" button.|3. Hover the cursor over the "Contul meu" button located next to the|search bar.|4. Click on the yellow "LOGOUT" button.|5. Click on the "Cart", located near the search bar.', 'The cart is empty.', 'Passed', 'Be sure to be logged in.']
    ] }),
  testSheet({ tab: 4, title: 'My account', edit: true, align: '', results: [3, 3, 1, 0, 7, '42,86%'],
    cols: run([22.5, 98.5, 198.8, 455.9, 915.5, 1300.2, 1373.6, 1534.3], 76.1, 2),
    rows: run([...top8, 361, 378.4, 394.5, 474.4, 561.2, 645.5, 730.2, 811.6, 902, 951.6, 965.5], 13, 3),
    tests: [
      ['1485', 'Add a product to Wishlist as a guest user', '1. From the main page, click on one random product.|2. From the product page, click on "Adauga in Wishlist" button, located under the|green "Adauga in cos" button.', 'The product is added in a guest "Wishlist".', 'Failed', 'Mantis ID: 0042916'],
      ['1600', 'Add a product to Wishlist as a registered user', '1. Log in with the info used in the registration process.|2. From the main page, click on one random product.|3. From the product page, click on "Adauga in Wishlist" button, located under the|green "Adauga in cos" button.', 'The product is added in the "Wishlist".', 'Passed'],
      ['1556', 'Changing the password', '1. Hover the cursor on the "Contul meu" button, located next to the search bar.|2. Click on the yellow "Schimba parola" button.|3. In the "Parola" field, type the old password, "1234567" in this case.|4. In the "Confirmare parola" field, type an alpha-numeric password.', 'The website warns the user that the password is mandatory to have|minimum 6 characters and a combination of letters/numbers and|symbols.', 'Blocked', 'Mantis ID: 0043092'],
      ['1601', 'Password security strength', '1. Hover the cursor on the "Contul meu" button, located next to the search bar.|2. Press on "Schimbare parola" button.|3. In the "Parola" field write "1234".|4. In the "Noua parola" bar write "1234" and press "Continuare" button.', 'The website warns the user that the password is mandatory to have|minimum 6 characters and a combination of letters/numbers and|symbols.', 'Failed', 'Mantis ID: 0042953'],
      ['1531', 'Press "Back" button after log-out', '1. Move the cursor over the "Contul meu" button, located next to the search bar.|2. Click on the yellow "Logout" button.|3. Click on the "Back/Previous page" button from the browser.', 'The website shows the main page, remembering that the user logged|out.', 'Passed', 'Be sure to be logged in.'],
      ['1602', 'Name field format', '1. Hover over the "Contul meu" button, located next to the search bar.|2. Click on the yellow "Date cont" button.|3. Write "John" in the "Nume" field.|4. Write "123" in the "Prenume" field.|5. Click on the "Continuare" button.', 'The website warns that the "Prenume" field doesn\'t accept numbers.', 'Failed', 'Mantis ID: 0043093'],
      ['1553', 'Check the "Termeni si conditii"', '1. From the main page, scroll to the bottom of the website.|2. From the "Link-uri utile" list, click on the "Termeni si conditi".', 'The "Termeni si conditii" page opens up.', 'Passed']
    ] }),
  testSheet({ tab: 5, title: 'Search', copy: false, thumb: 954, results: [0, 3, 0, 0, 3, '0,00%'],
    cols: run([22.5, 98.5, 195.5, 469.8, 861.4, 1252.5, 1331.3, 1500], 76, 3),
    rows: run([...top8, 361, 378.4, 394.5, 445.3, 508.3, 566.2, 579.2], 13, 33),
    tests: [
      ['1555', 'Search bar format', '1. From the main page, click on the search bar.|2. Press "SPACE" and then hit "ENTER".', 'The search bar recognizes that it has no characters in it and does|nothing.', 'Failed', 'Mantis ID: 0042954'],
      ['1603', 'Search bar special characters', '1. From the main page, click on the search bar.|2. Type "!$%".|3. Hit "ENTER".', 'The website warns the user that special characters are not accepted.|&nbsp;', 'Failed', 'Mantis ID: 0043094'],
      ['1604', 'Search bar minimum characters', '1. From the main page, click on the search bar.|2. Type "ab".|3. Hit "ENTER".', 'The website warns the user that the search bar accepts minimum 3|characters.', 'Failed', 'Mantis ID: 0043095']
    ] }),
  testSheet({ tab: 6, title: 'UI', copy: false, thumb: 960, results: [4, 0, 0, 0, 4, '100,00%'],
    cols: run([22.5, 98.5, 199.8, 483.8, 898.4, 1289.5, 1366.6, 1481.8], 76.1, 3),
    rows: run([...top8, 361, 378.4, 394.8, 487.5, 544.1, 652.2, 736.3, 749.3], 13, 20),
    tests: [
      ['1557', 'Direct buttons for social media', '1. Click on the yellow "Facebook" button, located above the search bar.|2. Click on the yellow "Instagram" button, located above the search bar.|3. Click on the yellow "Pinterest" button, located above the search bar.|4. Click on the yellow "YouTube" button, located above the search bar.', 'All the social media pages are displayed correctly.', 'Passed'],
      ['1554', '"Scroll-to-top" button', '1. From the main page, scroll down as much as you want.|2. Press on the black and yellow "Scroll-to-top" button.', 'The site jumps to the top of the page.', 'Passed'],
      ['1530', 'Subscribe to the newsletter with a valid e-mail', '1. On the main page of the site, scroll down until you see "Abonare la|newsletter" banner.|2. Enter a valid e-mail address in the "E-mail" bar and press "Ma abonez"|button.|3. Open the e-mail received from the site.|4. Click on the link from that e-mail.', 'https://www.intrerupatoare-tactile.ro main page opens.', 'Passed'],
      ['1558', 'Sort products after ascending price', '1. From the main page, hover the cursor over "Intrerupatoare" button,|located in the left part of the page, near the logo.|2. From that list, click on the "Intrerupatoare Tactile din Sticla".|3. From the "Sortare dupa" menu, select "Pret Mic &gt; Mare".', 'The website orders the products from the lowest to the highest price.', 'Passed']
    ] })
];

document.getElementById('stage').innerHTML = windows.map(o =>
  `<section class="window">${titlebar(o)}<div class="ribbon">${tabs()}${groups(o)}</div>${formula(o)}${sheet(o)}${bottom(o)}</section>`).join('');
```
